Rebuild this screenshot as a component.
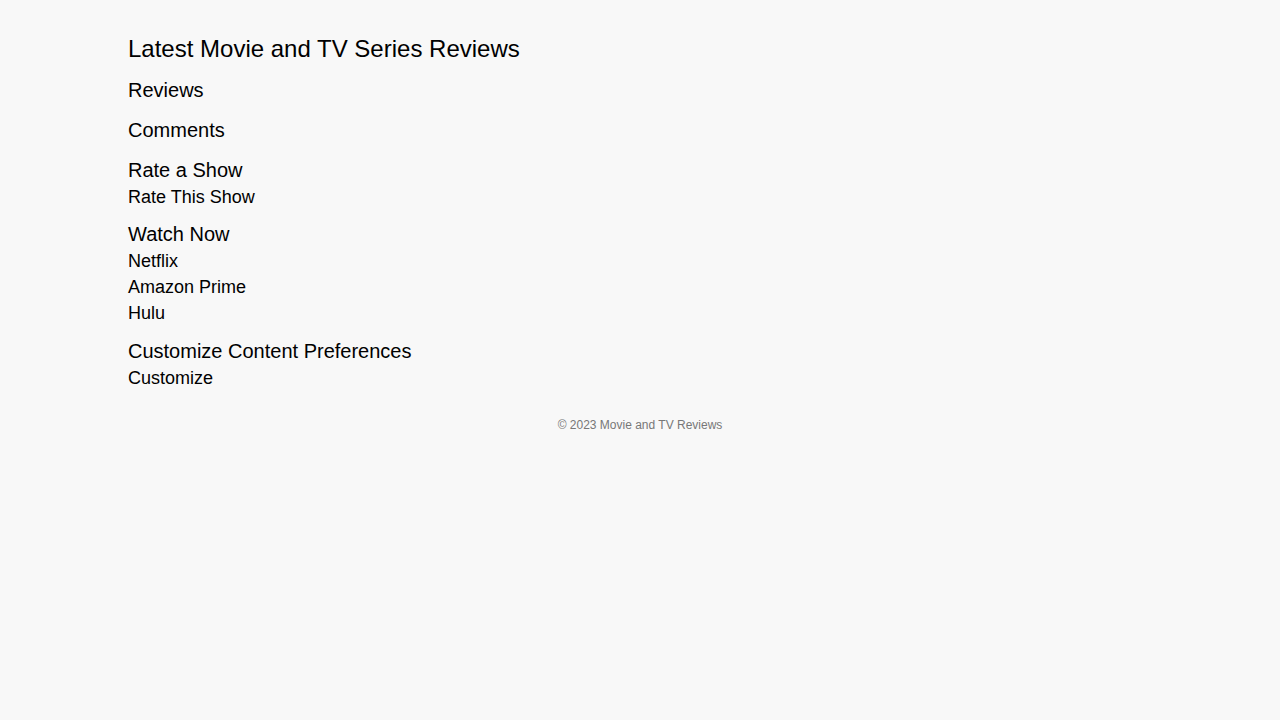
const sections = [
  { title: "Reviews", items: [] as string[], gap: "mt-[13px]" },
  { title: "Comments", items: [] as string[], gap: "mt-[13px]" },
  { title: "Rate a Show", items: ["Rate This Show"], gap: "mt-[13px]" },
  { title: "Watch Now", items: ["Netflix", "Amazon Prime", "Hulu"], gap: "mt-[11px]" },
  { title: "Customize Content Preferences", items: ["Customize"], gap: "mt-[12px]" },
];

export default function App() {
  return (
    <div className="min-h-screen bg-[#f8f8f8] text-black font-['Liberation_Sans',Arial,sans-serif]">
      <main className="w-[1024px] mx-auto pt-[34px]">
        <h1 className="text-[24px] leading-[30px] font-normal">Latest Movie and TV Series Reviews</h1>
        {sections.map((s) => (
          <section key={s.title} className={s.gap}>
            <h2 className="text-[20px] leading-[27px]">{s.title}</h2>
            {s.items.length > 0 && (
              <ul>
                {s.items.map((item) => (
                  <li key={item} className="text-[18px] leading-[26px]">
                    <a href="#">{item}</a>
                  </li>
                ))}
              </ul>
            )}
          </section>
        ))}
        <footer className="mt-[26px] text-center text-[12px] leading-[16px] text-[#777777]">
          © 2023 Movie and TV Reviews
        </footer>
      </main>
    </div>
  );
}
